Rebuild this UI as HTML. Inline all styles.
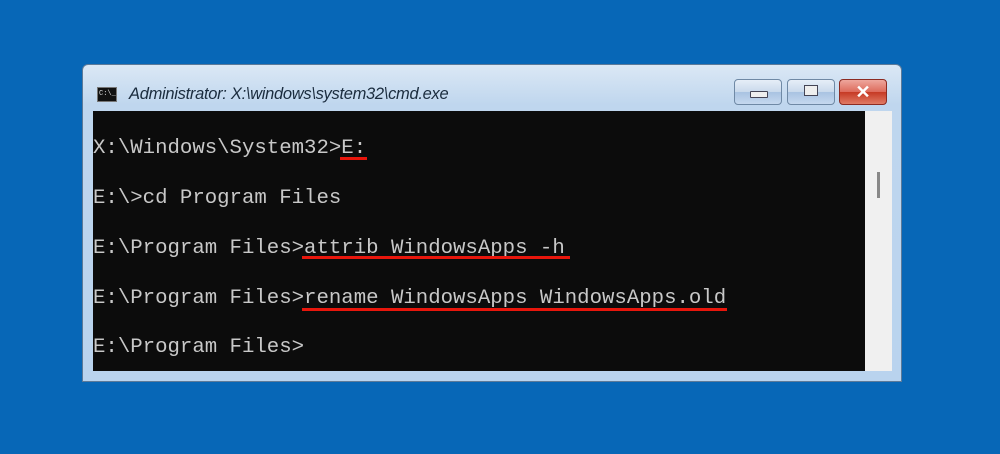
<!DOCTYPE html><html><head><style>
body{margin:0;width:1000px;height:454px;background:#0767b7;position:relative;overflow:hidden;font-family:"Liberation Sans",sans-serif}
.win{position:absolute;left:82px;top:64px;width:820px;height:318px;background:linear-gradient(#dbe8f5,#bfd6ee 40px,#b9d3ee);border:1px solid #5c7a99;border-radius:6px 6px 0 0;box-sizing:border-box}
.title{position:absolute;left:46px;top:20px;font-style:italic;font-size:16.5px;color:#1b2c3e;letter-spacing:-0.3px}
.ico{position:absolute;left:14px;top:22px;width:20px;height:15px;background:#111;border:1px solid #777;box-sizing:border-box;color:#ddd;font:7px "Liberation Mono";line-height:13px;text-indent:1px}
.btn{position:absolute;top:14px;height:26px;border:1px solid #6f89a5;border-radius:4px;box-sizing:border-box;background:linear-gradient(#e6eef8,#c9d9ec 50%,#a9c3e2 51%,#c5d8ee)}
.con{position:absolute;left:10px;top:46px;width:772px;height:260px;background:#0c0c0c}
.sb{position:absolute;left:782px;top:46px;width:27px;height:260px;background:#f0f0f0}
.l{position:absolute;left:10px;font:20.7px "Liberation Mono",monospace;color:#c8c8c8;white-space:pre}
.u{position:absolute;height:3px;background:#e8160c}
</style></head><body>
<div class="win">
<div class="ico">C:\_</div>
<div class="title">Administrator: X:\windows\system32\cmd.exe</div>
<div class="btn" style="left:651px;width:48px"><div style="position:absolute;left:15px;top:11px;width:16px;height:5px;background:#eee;border:1px solid #445;border-radius:1px"></div></div>
<div class="btn" style="left:704px;width:48px"><div style="position:absolute;left:16px;top:5px;width:12px;height:9px;background:#eee;border:1px solid #445"></div></div>
<div class="btn" style="left:756px;width:48px;border-color:#8c2b22;background:linear-gradient(#eea79d,#dd6a5b 50%,#c63a25 51%,#e07a64)"><div style="position:absolute;left:0;width:46px;top:2px;text-align:center;color:#fff;font:bold 18px 'Liberation Sans'">✕</div></div>
<div class="con"></div>
<div class="sb"><div style="position:absolute;left:12px;top:61px;width:3px;height:26px;background:#888"></div></div>
</div>
<div class="l" style="top:137px;left:93px">X:\Windows\System32>E:</div>
<div class="l" style="top:187px;left:93px">E:\>cd Program Files</div>
<div class="l" style="top:237px;left:93px">E:\Program Files>attrib WindowsApps -h</div>
<div class="l" style="top:287px;left:93px">E:\Program Files>rename WindowsApps WindowsApps.old</div>
<div class="l" style="top:336px;left:93px">E:\Program Files></div>
<div class="u" style="left:340px;width:27px;top:157px"></div>
<div class="u" style="left:302px;width:268px;top:256px"></div>
<div class="u" style="left:302px;width:425px;top:308px"></div>
</body></html>
